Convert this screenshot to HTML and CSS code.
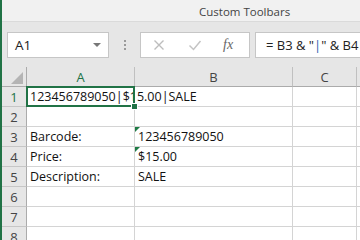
FILE: index.html
```html
<!DOCTYPE html>
<html lang="en">
<head>
    <meta charset="UTF-8">
    <title>Custom Toolbars</title>
    <link rel="stylesheet" href="styles.css">
</head>
<body>
<div class="window">
    <div class="titlebar">Custom Toolbars</div>
    <div class="formula-bar">
        <div class="name-box">
            <span>A1</span>
            <span class="caret"></span>
        </div>
        <div class="grip"><i></i><i></i><i></i></div>
        <div class="fx-buttons">
            <svg class="fx-icon" width="12" height="12" viewBox="0 0 12 12"><path d="M1.5 1.5l9 9M10.5 1.5l-9 9" stroke="#bdbdbd" stroke-width="1.4" fill="none"/></svg>
            <svg class="fx-icon" width="14" height="12" viewBox="0 0 14 12"><path d="M1.5 6.5l4 4 7-8.5" stroke="#c4c4c4" stroke-width="1.5" fill="none"/></svg>
            <span class="fx">fx</span>
        </div>
        <div class="formula">= B3 &amp; "<span class="pipe">|</span>" &amp; B4 &amp; "|" &amp; B5</div>
    </div>
    <div class="sheet">
        <div class="hdr corner"><span class="tri"></span></div>
        <div class="hdr col active">A</div>
        <div class="hdr col">B</div>
        <div class="hdr col">C</div>
        <div class="hdr col"></div>

        <div class="hdr row active">1</div>
        <div class="cell overflow selected">123456789050|$15.00|SALE<span class="handle"></span></div>
        <div class="cell"></div>
        <div class="cell"></div>
        <div class="cell"></div>

        <div class="hdr row">2</div>
        <div class="cell"></div>
        <div class="cell"></div>
        <div class="cell"></div>
        <div class="cell"></div>

        <div class="hdr row">3</div>
        <div class="cell">Barcode:</div>
        <div class="cell flag">123456789050</div>
        <div class="cell"></div>
        <div class="cell"></div>

        <div class="hdr row">4</div>
        <div class="cell">Price:</div>
        <div class="cell flag">$15.00</div>
        <div class="cell"></div>
        <div class="cell"></div>

        <div class="hdr row">5</div>
        <div class="cell">Description:</div>
        <div class="cell">SALE</div>
        <div class="cell"></div>
        <div class="cell"></div>

        <div class="hdr row">6</div>
        <div class="cell"></div>
        <div class="cell"></div>
        <div class="cell"></div>
        <div class="cell"></div>

        <div class="hdr row">7</div>
        <div class="cell"></div>
        <div class="cell"></div>
        <div class="cell"></div>
        <div class="cell"></div>

        <div class="hdr row">8</div>
        <div class="cell"></div>
        <div class="cell"></div>
        <div class="cell"></div>
        <div class="cell"></div>
    </div>
</div>
</body>
</html>
```

FILE: styles.css
```css
body {
    margin: 0;
    font-family: "Open Sans", sans-serif;
    overflow: hidden;
}
.window {
    width: 360px;
    height: 240px;
    border-left: 2px solid #217346;
    box-sizing: border-box;
    overflow: hidden;
    background: #e6e6e6;
}
.titlebar {
    height: 21px;
    background: #f1f1f1;
    border-bottom: 1px solid #dadada;
    color: #444;
    font-size: 11.5px;
    line-height: 23px;
    padding-left: 197px;
    white-space: nowrap;
}
.formula-bar {
    height: 45px;
    display: flex;
    align-items: flex-start;
    padding: 10px 0 0 5px;
    box-sizing: border-box;
    white-space: nowrap;
}
.name-box {
    width: 102px;
    height: 26px;
    background: #fff;
    border: 1px solid #c6c6c6;
    display: flex;
    align-items: center;
    justify-content: space-between;
    padding: 0 7px;
    box-sizing: border-box;
    font-size: 13.5px;
    color: #222;
}
.caret {
    width: 0;
    height: 0;
    border-left: 4px solid transparent;
    border-right: 4px solid transparent;
    border-top: 4px solid #777;
}
.grip {
    width: 31px;
    display: flex;
    flex-direction: column;
    align-items: center;
    gap: 2px;
    padding-top: 8px;
}
.grip i {
    width: 2px;
    height: 2px;
    background: #9a9a9a;
}
.fx-buttons {
    width: 110px;
    height: 26px;
    background: #fff;
    border: 1px solid #c6c6c6;
    box-sizing: border-box;
    display: flex;
    align-items: center;
    padding-left: 12px;
    gap: 23px;
}
.fx {
    font-family: "Liberation Serif", serif;
    font-style: italic;
    font-size: 14px;
    color: #666;
    margin-left: -2px;
}
.formula {
    margin-left: 5px;
    flex: 1;
    height: 26px;
    background: #fff;
    border: 1px solid #c6c6c6;
    border-right: none;
    box-sizing: border-box;
    font-size: 13px;
    line-height: 24px;
    padding-left: 10px;
    color: #222;
    overflow: hidden;
}
.pipe {
    color: #2a5db0;
}
.sheet {
    display: grid;
    grid-template-columns: 25px 108px 158px 64px 1fr;
    grid-auto-rows: 20px;
    background: #fff;
    font-size: 12.5px;
}
.hdr {
    background: #e6e6e6;
    color: #444;
    font-size: 13px;
    display: flex;
    align-items: center;
    justify-content: center;
    border-right: 1px solid #c6c6c6;
    border-bottom: 1px solid #d4d4d4;
    box-sizing: border-box;
}
.hdr.col {
    border-bottom: 1px solid #ababab;
    border-right: 1px solid #c0c0c0;
    padding-top: 1px;
}
.hdr.col:last-child {
    border-right: none;
}
.hdr.row {
    border-right: 1px solid #ababab;
    border-bottom: 1px solid #c6c6c6;
}
.hdr.active {
    color: #217346;
}
.corner {
    border-right: 1px solid #ababab;
    border-bottom: 1px solid #ababab;
    position: relative;
}
.tri {
    position: absolute;
    right: 3px;
    bottom: 2px;
    width: 0;
    height: 0;
    border-left: 12px solid transparent;
    border-bottom: 12px solid #b4b4b4;
}
.cell {
    border-right: 1px solid #d4d4d4;
    border-bottom: 1px solid #d4d4d4;
    box-sizing: border-box;
    padding: 1px 0 0 3px;
    line-height: 18px;
    color: #111;
    white-space: nowrap;
    position: relative;
}
.overflow {
    overflow: visible;
    z-index: 2;
}
.selected::before {
    content: "";
    position: absolute;
    left: -1px;
    top: -1px;
    right: -1px;
    bottom: -1px;
    border: 2px solid #217346;
}
.handle {
    position: absolute;
    right: -4px;
    bottom: -4px;
    width: 5px;
    height: 5px;
    background: #217346;
    border: 1px solid #fff;
}
.flag::after {
    content: "";
    position: absolute;
    left: 0;
    top: 0;
    border-top: 5px solid #1e7b45;
    border-right: 5px solid transparent;
}
```
